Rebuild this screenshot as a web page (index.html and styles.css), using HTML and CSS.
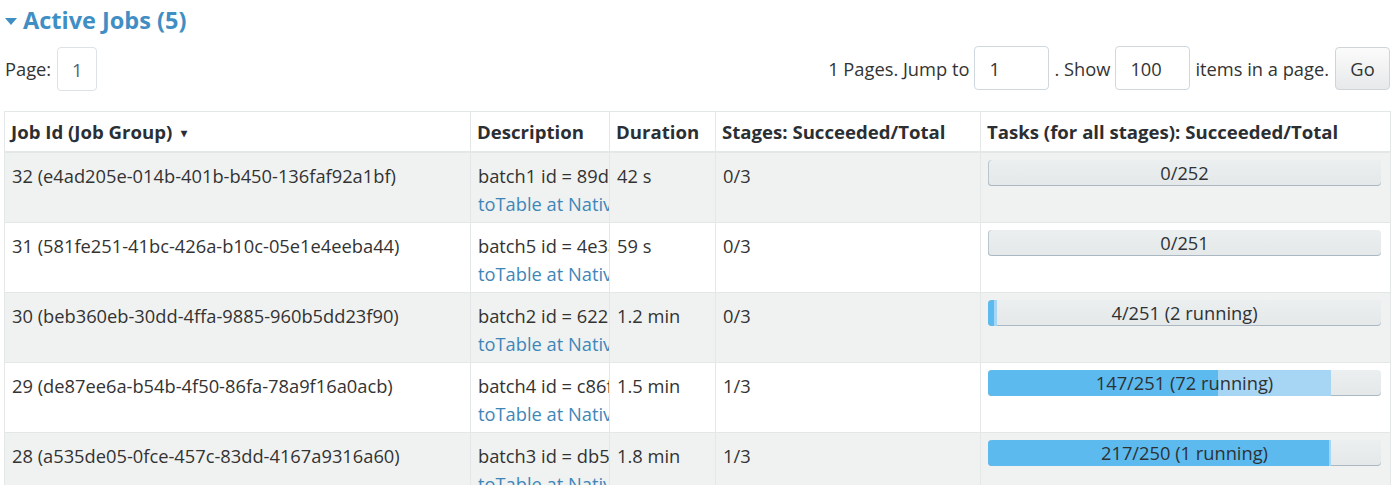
FILE: index.html
```html
<!DOCTYPE html>
<html>
<head>
<meta charset="utf-8">
<link rel="stylesheet" href="styles.css">
</head>
<body>
<h4 class="section-title"><span class="arrow"></span>Active Jobs (5)</h4>
<div class="pager">
  <div class="pager-left">
    <span>Page:</span>
    <span class="page-box">1</span>
  </div>
  <div class="pager-right">
    <span>1 Pages. Jump to</span>
    <span class="input">1</span>
    <span>. Show</span>
    <span class="input">100</span>
    <span>items in a page.</span>
    <span class="btn">Go</span>
  </div>
</div>
<table class="jobs">
  <colgroup>
    <col class="c-id"><col class="c-desc"><col class="c-dur"><col class="c-stage"><col class="c-task">
  </colgroup>
  <thead>
    <tr>
      <th>Job Id (Job Group) <span class="sort">&#9662;</span></th>
      <th>Description</th>
      <th>Duration</th>
      <th>Stages: Succeeded/Total</th>
      <th>Tasks (for all stages): Succeeded/Total</th>
    </tr>
  </thead>
  <tbody>
    <tr class="odd">
      <td>32 (e4ad205e-014b-401b-b450-136faf92a1bf)</td>
      <td class="desc"><div class="clip">batch1 id = 89d1e7c2<br><a>toTable at NativeMethodAccessorImpl.java:0</a></div></td>
      <td>42 s</td>
      <td>0/3</td>
      <td class="bar-cell"><div class="bar"><span class="done" style="width:0%"></span><span class="run" style="width:0%"></span><span class="label">0/252</span></div></td>
    </tr>
    <tr>
      <td>31 (581fe251-41bc-426a-b10c-05e1e4eeba44)</td>
      <td class="desc"><div class="clip">batch5 id = 4e3a91f0<br><a>toTable at NativeMethodAccessorImpl.java:0</a></div></td>
      <td>59 s</td>
      <td>0/3</td>
      <td class="bar-cell"><div class="bar"><span class="done" style="width:0%"></span><span class="run" style="width:0%"></span><span class="label">0/251</span></div></td>
    </tr>
    <tr class="odd">
      <td>30 (beb360eb-30dd-4ffa-9885-960b5dd23f90)</td>
      <td class="desc"><div class="clip">batch2 id = 622c8d14<br><a>toTable at NativeMethodAccessorImpl.java:0</a></div></td>
      <td>1.2 min</td>
      <td>0/3</td>
      <td class="bar-cell"><div class="bar"><span class="done" style="width:1.6%"></span><span class="run" style="width:0.8%"></span><span class="label">4/251 (2 running)</span></div></td>
    </tr>
    <tr>
      <td>29 (de87ee6a-b54b-4f50-86fa-78a9f16a0acb)</td>
      <td class="desc"><div class="clip">batch4 id = c86f02b7<br><a>toTable at NativeMethodAccessorImpl.java:0</a></div></td>
      <td>1.5 min</td>
      <td>1/3</td>
      <td class="bar-cell"><div class="bar"><span class="done" style="width:58.6%"></span><span class="run" style="width:28.7%"></span><span class="label">147/251 (72 running)</span></div></td>
    </tr>
    <tr class="odd">
      <td>28 (a535de05-0fce-457c-83dd-4167a9316a60)</td>
      <td class="desc"><div class="clip">batch3 id = db5e7a63<br><a>toTable at NativeMethodAccessorImpl.java:0</a></div></td>
      <td>1.8 min</td>
      <td>1/3</td>
      <td class="bar-cell"><div class="bar"><span class="done" style="width:86.8%"></span><span class="run" style="width:0.4%"></span><span class="label">217/250 (1 running)</span></div></td>
    </tr>
  </tbody>
</table>
</body>
</html>
```

FILE: styles.css
```css
html, body {
  margin: 0;
  padding: 0;
  background: #ffffff;
}
body {
  font-family: "Open Sans", "Noto Sans", sans-serif;
  font-size: 18.3px;
  color: #333333;
  padding: 0 10px 0 4px;
  overflow: hidden;
}
.section-title {
  margin: 0;
  padding: 3px 0 0 1px;
  height: 37px;
  font-size: 23.5px;
  font-weight: 700;
  color: #3f8ec4;
  display: flex;
  align-items: center;
  gap: 6px;
  box-sizing: border-box;
}
.arrow {
  display: inline-block;
  width: 0;
  height: 0;
  border-left: 6px solid transparent;
  border-right: 6px solid transparent;
  border-top: 7px solid #3f8ec4;
  margin-top: 2px;
}
.pager {
  display: flex;
  justify-content: space-between;
  align-items: center;
  height: 46px;
  margin-top: 8px;
}
.pager-left, .pager-right {
  display: flex;
  align-items: center;
}
.pager-left { gap: 6px; padding-left: 1px; }
.pager-right { gap: 5px; padding-right: 0; }
.page-box {
  width: 40px;
  height: 44px;
  box-sizing: border-box;
  border: 1px solid #dde2e6;
  border-radius: 4px;
  display: flex;
  align-items: center;
  justify-content: center;
  color: #4d6478;
  margin-top: 2px;
}
.input {
  width: 75px;
  height: 44px;
  box-sizing: border-box;
  border: 1px solid #cfd8de;
  border-radius: 4px;
  display: flex;
  align-items: center;
  padding-left: 14px;
  color: #333;
}
.btn {
  width: 55px;
  height: 43px;
  box-sizing: border-box;
  border: 1px solid #cfd4d8;
  border-radius: 4px;
  background: linear-gradient(#fbfbfb, #e7e9ea);
  display: flex;
  align-items: center;
  justify-content: center;
  margin-left: 1px;
  margin-top: 1px;
}
.jobs {
  margin-top: 20px;
  border-collapse: collapse;
  table-layout: fixed;
  width: 1386px;
}
.c-id { width: 466px; }
.c-desc { width: 139px; }
.c-dur { width: 106px; }
.c-stage { width: 265px; }
.c-task { width: 410px; }
.jobs th, .jobs td {
  border: 1px solid #e3e7e8;
  text-align: left;
  vertical-align: top;
}
.jobs th {
  height: 39px;
  padding: 0 6px;
  vertical-align: middle;
  font-weight: 700;
  font-size: 18.6px;
  color: #2b2f33;
  border-bottom: 2px solid #e3e7e8;
  white-space: nowrap;
}
.sort {
  font-size: 12px;
  margin-left: 4px;
  position: relative;
  top: -2px;
}
.jobs td {
  height: 70px;
  box-sizing: border-box;
  padding: 9px 7px 0 7px;
  line-height: 28px;
}
.jobs tr.odd td {
  background: #f0f2f2;
}
.jobs td.desc {
  padding-right: 0;
}
.clip {
  overflow: hidden;
  white-space: nowrap;
  width: 131px;
}
.clip a {
  color: #3f86b8;
  text-decoration: none;
}
.jobs td.bar-cell {
  padding: 7px 9px 0 7px;
}
.bar {
  position: relative;
  height: 26px;
  border-radius: 4px;
  background: linear-gradient(#ecefef, #e4e8e9);
  box-shadow: inset 0 -1px 0 #a9b8c2, inset 1px 0 0 #b8c6ce;
  display: flex;
  overflow: hidden;
}
.done {
  display: block;
  height: 100%;
  background: #5dbaee;
}
.run {
  display: block;
  height: 100%;
  background: #a6d6f4;
}
.label {
  position: absolute;
  left: 0;
  right: 0;
  top: 0;
  line-height: 26px;
  text-align: center;
  color: #2e3235;
  font-size: 18.3px;
}
```
